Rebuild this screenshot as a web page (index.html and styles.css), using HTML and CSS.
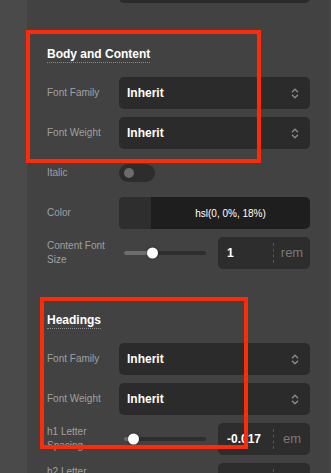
FILE: index.html
```html
<!DOCTYPE html>
<html lang="en">
<head>
<meta charset="utf-8"/>
<meta content="width=device-width, initial-scale=1.0" name="viewport"/>
<title>Typography settings</title>
<link rel="stylesheet" href="styles.css">
</head>
<body>
<div class="side-strip"></div>
<div class="panel">
  <!-- row cut off at the top -->
  <div class="row row-cut">
    <div class="label"></div>
    <div class="select"></div>
  </div>

  <!-- Body and Content -->
  <div class="section">
    <div class="section-title">Body and Content</div>
    <div class="row">
      <div class="label">Font Family</div>
      <div class="select">
        <span>Inherit</span>
        <svg class="chevron" viewBox="0 0 8 11"><path d="M1 4.2L4 1.2l3 3M1 6.8l3 3 3-3"/></svg>
      </div>
    </div>
    <div class="row">
      <div class="label">Font Weight</div>
      <div class="select">
        <span>Inherit</span>
        <svg class="chevron" viewBox="0 0 8 11"><path d="M1 4.2L4 1.2l3 3M1 6.8l3 3 3-3"/></svg>
      </div>
    </div>
    <div class="row">
      <div class="label">Italic</div>
      <div class="toggle"><span class="knob"></span></div>
    </div>
    <div class="row">
      <div class="label">Color</div>
      <div class="color-field">
        <span class="swatch"></span>
        <span class="color-value">hsl(0, 0%, 18%)</span>
      </div>
    </div>
    <div class="row">
      <div class="label">Content Font Size</div>
      <div class="range-control">
        <div class="slider">
          <div class="track"><div class="fill" style="width: 28px"><span class="thumb"></span></div></div>
        </div>
        <div class="number-box">
          <span class="number">1</span>
          <span class="unit">rem</span>
        </div>
      </div>
    </div>
  </div>

  <!-- Headings -->
  <div class="section">
    <div class="section-title">Headings</div>
    <div class="row">
      <div class="label">Font Family</div>
      <div class="select">
        <span>Inherit</span>
        <svg class="chevron" viewBox="0 0 8 11"><path d="M1 4.2L4 1.2l3 3M1 6.8l3 3 3-3"/></svg>
      </div>
    </div>
    <div class="row">
      <div class="label">Font Weight</div>
      <div class="select">
        <span>Inherit</span>
        <svg class="chevron" viewBox="0 0 8 11"><path d="M1 4.2L4 1.2l3 3M1 6.8l3 3 3-3"/></svg>
      </div>
    </div>
    <div class="row">
      <div class="label">h1 Letter Spacing</div>
      <div class="range-control">
        <div class="slider">
          <div class="track"><div class="fill" style="width: 9px"><span class="thumb"></span></div></div>
        </div>
        <div class="number-box">
          <span class="number">-0.017</span>
          <span class="unit">em</span>
        </div>
      </div>
    </div>
    <div class="row">
      <div class="label">h2 Letter Spacing</div>
      <div class="range-control">
        <div class="slider">
          <div class="track"><div class="fill" style="width: 9px"><span class="thumb"></span></div></div>
        </div>
        <div class="number-box">
          <span class="number">-0.017</span>
          <span class="unit">em</span>
        </div>
      </div>
    </div>
  </div>
</div>

<!-- annotation boxes -->
<div class="mark mark-body"></div>
<div class="mark mark-headings"></div>
</body>
</html>
```

FILE: styles.css
```css
body {
  margin: 0;
  height: 100vh;
  display: flex;
  background-color: #4a4a4a;
  font-family: "Liberation Sans", Arial, sans-serif;
  overflow: hidden;
}

.side-strip {
  width: 27px;
  flex: none;
  background-color: #4a4a4a;
}

.panel {
  flex: 1;
  padding: 0 19px 0 20px;
  background-color: #424242;
  border-right: 2px solid #464646;
}

.section {
  display: flex;
  flex-direction: column;
  gap: 8px;
  padding-top: 44px;
}

.section-title {
  width: max-content;
  margin-bottom: 6px;
  padding-bottom: 1px;
  border-bottom: 1px dotted #8a8a8a;
  color: #fff;
  font-size: 12px;
  font-weight: bold;
  line-height: 14px;
}

.row {
  display: grid;
  grid-template-columns: 72px 1fr;
  align-items: center;
  min-height: 32px;
}

.row-cut {
  margin-top: -29px;
}

.label {
  padding-right: 8px;
  color: #a0a0a0;
  font-size: 10px;
  line-height: 14px;
}

/* select */
.select {
  display: flex;
  align-items: center;
  justify-content: space-between;
  height: 32px;
  padding: 0 11px 0 8px;
  background-color: #2b2b2b;
  border-radius: 5px;
  color: #fff;
  font-size: 12px;
  font-weight: bold;
}

.chevron {
  width: 8px;
  height: 11px;
  fill: none;
  stroke: #8c8c8c;
  stroke-width: 1.3;
}

/* toggle */
.toggle {
  display: flex;
  align-items: center;
  width: 36px;
  height: 18px;
  padding-left: 5px;
  box-sizing: border-box;
  background-color: #2d2d2d;
  border-radius: 9px;
}

.knob {
  width: 10px;
  height: 10px;
  border-radius: 50%;
  background-color: #6b6b6b;
}

/* color */
.color-field {
  display: flex;
  height: 32px;
  border-radius: 5px;
  overflow: hidden;
  background-color: #1e1e1e;
}

.swatch {
  width: 32px;
  background-color: #2e2e2e;
}

.color-value {
  flex: 1;
  display: flex;
  align-items: center;
  justify-content: center;
  color: #fff;
  font-size: 10px;
}

/* slider + number */
.range-control {
  display: flex;
  align-items: center;
  gap: 12px;
}

.slider {
  flex: 1;
  padding-left: 5px;
}

.track {
  height: 4px;
  border-radius: 2px;
  background-color: #2e2e2e;
}

.fill {
  position: relative;
  height: 100%;
  border-radius: 2px;
  background-color: #6e6e6e;
}

.thumb {
  position: absolute;
  top: 50%;
  right: -6px;
  width: 11px;
  height: 11px;
  border-radius: 50%;
  background-color: #fff;
  box-shadow: 0 0 3px rgba(0, 0, 0, 0.4);
  transform: translateY(-50%);
}

.number-box {
  display: flex;
  align-items: center;
  width: 92px;
  height: 32px;
  flex: none;
  background-color: #2d2d2d;
  border-radius: 5px;
}

.number {
  flex: 1;
  padding-left: 9px;
  color: #fff;
  font-size: 12px;
  font-weight: bold;
}

.unit {
  width: 36px;
  border-left: 1px dashed #555;
  color: #7a7a7a;
  font-size: 13px;
  line-height: 20px;
  text-align: center;
}

/* red annotation boxes */
.mark {
  position: absolute;
  border: 4px solid #ff2a06;
  box-sizing: border-box;
}

.mark-body {
  left: 26px;
  top: 30px;
  width: 235px;
  height: 133px;
}

.mark-headings {
  left: 40px;
  top: 297px;
  width: 208px;
  height: 152px;
}
```
